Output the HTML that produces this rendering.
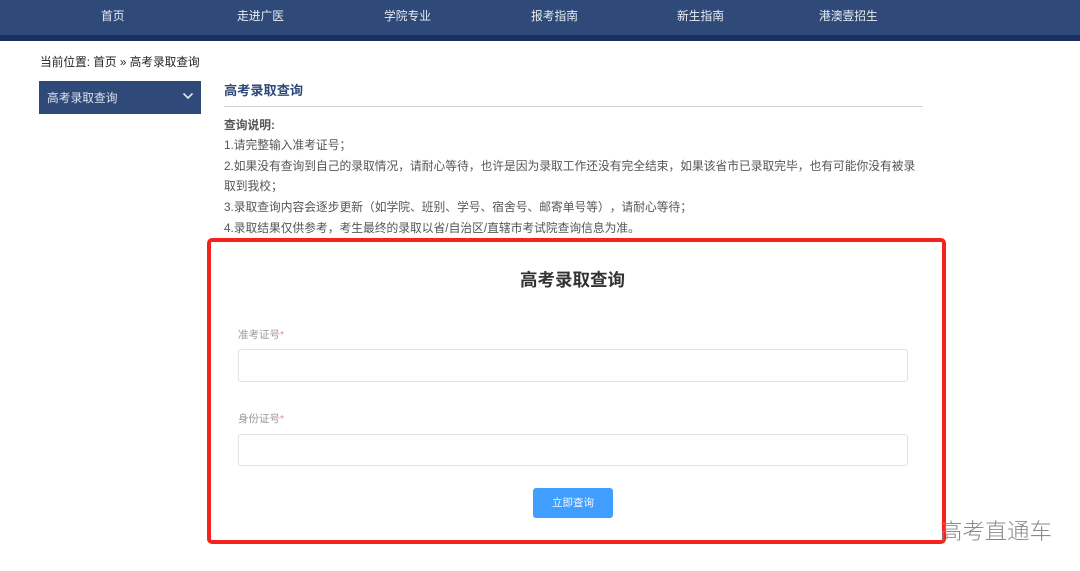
<!DOCTYPE html>
<html lang="zh-CN">
<head>
<meta charset="utf-8">
<title>高考录取查询</title>
<style>
*{box-sizing:border-box;margin:0;padding:0}
html,body{width:1080px;height:571px;overflow:hidden;background:#fff;font-family:"Liberation Sans","Noto Sans CJK SC",sans-serif;text-spacing-trim:space-all}
.a{position:absolute;white-space:nowrap}
#nav{left:0;top:0;width:1080px;height:35px;background:#2f4a78}
#navb{left:0;top:35px;width:1080px;height:6px;background:#1a315f}
.n{top:8px;font-size:11.75px;line-height:18px;color:#e8ecf3}
.d{left:224px;font-size:11.75px;line-height:20px;color:#555}
</style>
</head>
<body>
<div class="a" id="nav"></div>
<div class="a" id="navb"></div>
<div class="a n" style="left:101px">首页</div>
<div class="a n" style="left:237px">走进广医</div>
<div class="a n" style="left:384px">学院专业</div>
<div class="a n" style="left:531px">报考指南</div>
<div class="a n" style="left:677px">新生指南</div>
<div class="a n" style="left:819px">港澳壹招生</div>

<div class="a" style="left:40px;top:54px;font-size:11.7px;line-height:18px;color:#222">当前位置: 首页 » 高考录取查询</div>

<div class="a" style="left:39px;top:81px;width:162px;height:33px;background:#2f4a78"></div>
<div class="a" style="left:47px;top:89px;font-size:11.75px;line-height:20px;color:#dfe4ee">高考录取查询</div>
<svg class="a" style="left:182px;top:92px" width="12" height="8" viewBox="0 0 12 8"><path d="M1.5 1.5L6 6L10.500 1.500" fill="none" stroke="#e4e8f0" stroke-width="1.600"/></svg>

<div class="a" style="left:224px;top:81px;font-size:13.2px;line-height:20px;font-weight:bold;color:#2f4a78">高考录取查询</div>
<div class="a" style="left:224px;top:106px;width:699px;height:1px;background:#d2d2d2"></div>

<div class="a d" style="top:116px;font-weight:bold">查询说明:</div>
<div class="a d" style="top:136px">1.请完整输入准考证号；</div>
<div class="a d" style="top:157px">2.如果没有查询到自己的录取情况，请耐心等待，也许是因为录取工作还没有完全结束，如果该省市已录取完毕，也有可能你没有被录</div>
<div class="a d" style="top:177px">取到我校；</div>
<div class="a d" style="top:198px">3.录取查询内容会逐步更新（如学院、班别、学号、宿舍号、邮寄单号等），请耐心等待；</div>
<div class="a d" style="top:219px">4.录取结果仅供参考，考生最终的录取以省/自治区/直辖市考试院查询信息为准。</div>

<div class="a" style="left:207px;top:238px;width:739px;height:306px;border:4px solid #f5231b;border-radius:5px"></div>

<div class="a" style="left:520px;top:268px;font-size:17.5px;line-height:24px;font-weight:bold;color:#333">高考录取查询</div>

<div class="a" style="left:238px;top:327px;font-size:10.5px;line-height:16px;color:#999">准考证号<span style="color:#f08a8a">*</span></div>
<div class="a" style="left:238px;top:349px;width:670px;height:33px;border:1px solid #e3e3e3;border-radius:3px"></div>
<div class="a" style="left:238px;top:411px;font-size:10.5px;line-height:16px;color:#999">身份证号<span style="color:#f08a8a">*</span></div>
<div class="a" style="left:238px;top:434px;width:670px;height:32px;border:1px solid #e3e3e3;border-radius:3px"></div>

<div class="a" style="left:533px;top:488px;width:80px;height:30px;background:#409eff;border-radius:3px;color:#f2f8ff;font-size:10.5px;line-height:31px;text-align:center">立即查询</div>

<div class="a" style="left:940px;top:518px;font-size:22.4px;line-height:28px;color:#8a8a8a;font-weight:300">高考直通车</div>
</body>
</html>
